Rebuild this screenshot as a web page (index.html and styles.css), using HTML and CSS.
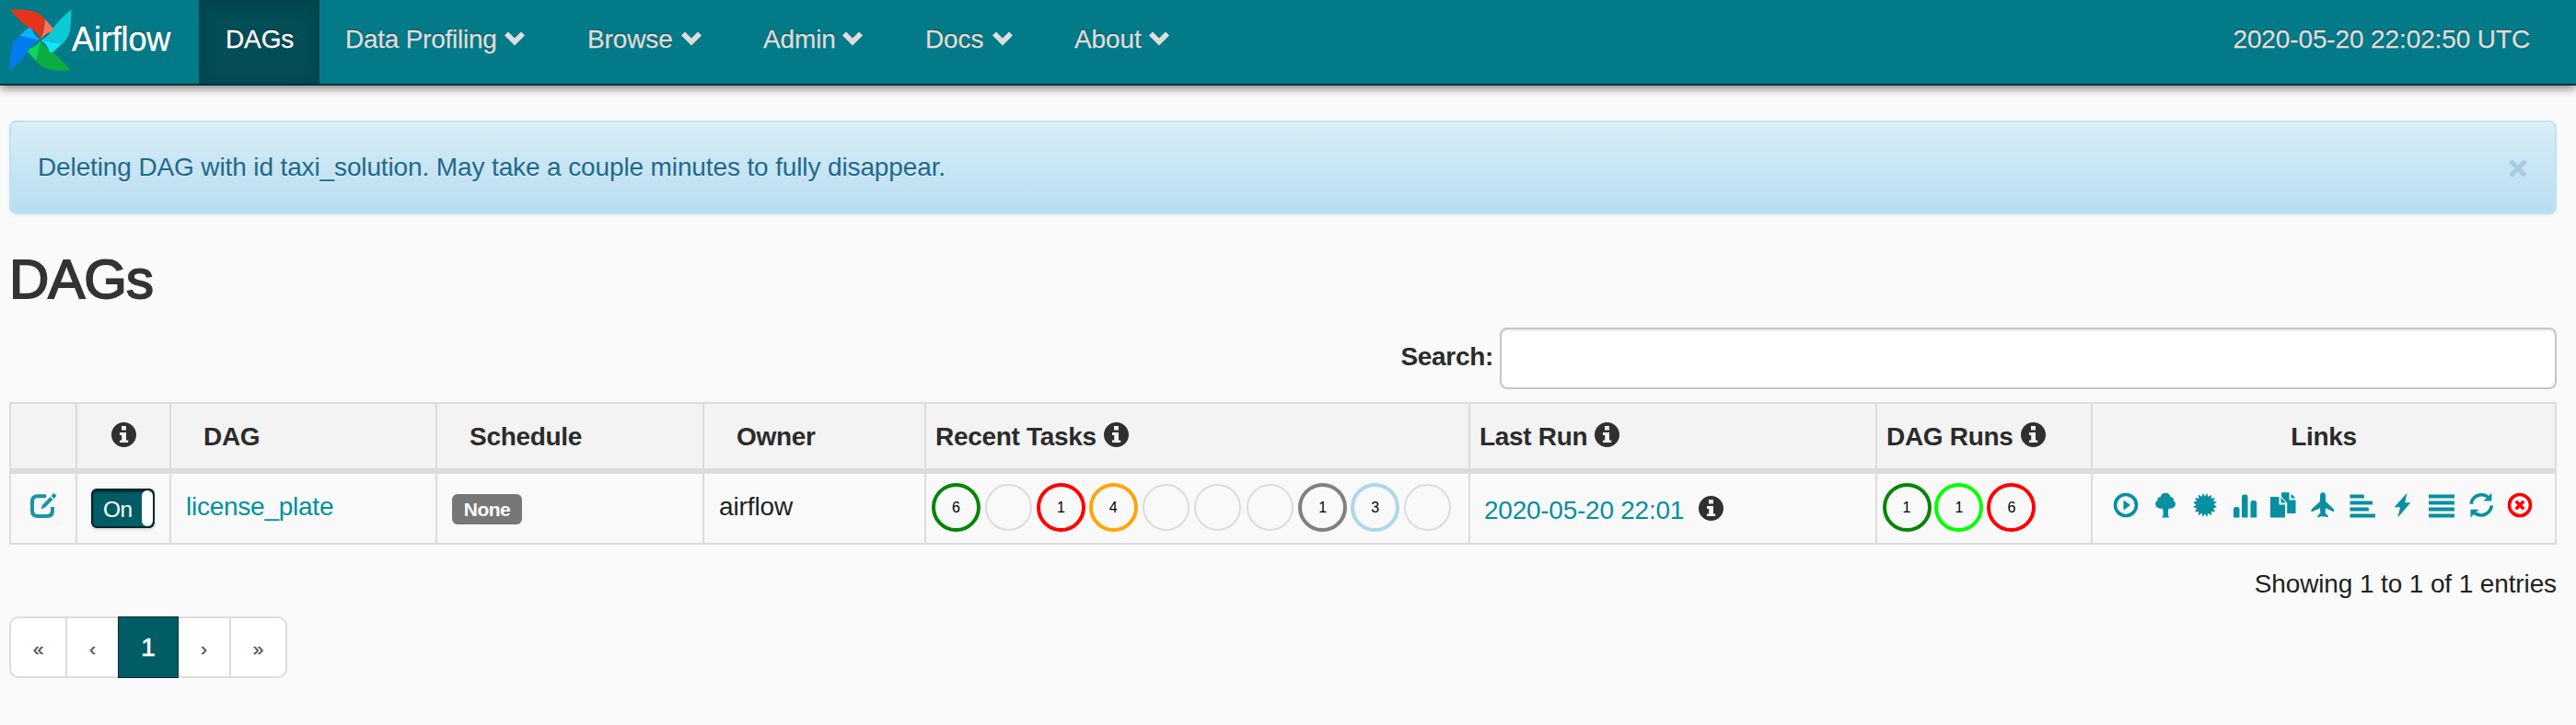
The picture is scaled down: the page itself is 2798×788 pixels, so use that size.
FILE: index.html
```html
<!DOCTYPE html>
<html lang="en">
<head>
<meta charset="utf-8">
<title>Airflow - DAGs</title>
<link rel="stylesheet" href="styles.css">
</head>
<body>
<svg class="defs" width="0" height="0" aria-hidden="true">
  <symbol id="info" viewBox="0 0 27 27"><path fill-rule="evenodd" d="M13.5 0a13.5 13.5 0 1 1 0 27a13.5 13.5 0 1 1 0-27zM11 4v4.6h5V4zM9 11v3h2.200v5.500H9V22h9.200v-2.500H16V11z"/></symbol>
  <symbol id="chevron" viewBox="0 0 22 16"><path d="M0 4.500L4 .6L11 7.500L18 .6L22 4.500L11 15.500z"/></symbol>
</svg>
<nav class="navbar">
  <a class="brand" href="#">
    <svg class="logo" viewBox="30 28 204 204">
      <g transform="rotate(270 132 130)"><path fill="#017cee" d="M32 30C90 30 125 32 146 62Q136 95 132 130Q122 105 92 88Q68 72 32 30z"/><path fill="#11b0ff" d="M146 62Q160 76 174 93Q172 102 160 105Q145 110 132 130Q138 90 146 62z"/></g>
      <g transform="rotate(180 132 130)"><path fill="#0bad43" d="M32 30C90 30 125 32 146 62Q136 95 132 130Q122 105 92 88Q68 72 32 30z"/><path fill="#0bd659" d="M146 62Q160 76 174 93Q172 102 160 105Q145 110 132 130Q138 90 146 62z"/></g>
      <g transform="rotate(90 132 130)"><path fill="#0cc9d6" d="M32 30C90 30 125 32 146 62Q136 95 132 130Q122 105 92 88Q68 72 32 30z"/><path fill="#11e5f2" d="M146 62Q160 76 174 93Q172 102 160 105Q145 110 132 130Q138 90 146 62z"/></g>
      <path fill="#e6341a" d="M32 30C90 30 125 32 146 62Q144 95 132 130Q130 105 92 88Q68 72 32 30z"/><path fill="#ff7458" d="M146 62Q160 76 174 93Q172 102 160 105Q145 110 132 130Q148 90 146 62z"/>
      <circle cx="132" cy="130" r="4" fill="#40605c"/>
    </svg><span>Airflow</span>
  </a>
  <a class="item active" href="#">DAGs</a>
  <a class="item profiling" href="#">Data Profiling<svg class="caret"><use href="#chevron"/></svg></a>
  <a class="item browse" href="#">Browse<svg class="caret"><use href="#chevron"/></svg></a>
  <a class="item admin" href="#">Admin<svg class="caret"><use href="#chevron"/></svg></a>
  <a class="item docs" href="#">Docs<svg class="caret"><use href="#chevron"/></svg></a>
  <a class="item about" href="#">About<svg class="caret"><use href="#chevron"/></svg></a>
  <span class="clock">2020-05-20 22:02:50 UTC</span>
</nav>
<main>
  <div class="alert"><span>Deleting DAG with id taxi_solution. May take a couple minutes to fully disappear.</span>
    <svg class="close" viewBox="0 0 20 20"><path d="M2 2L18 18M18 2L2 18"/></svg></div>
  <h1>DAGs</h1>
  <div class="search"><label for="q">Search:</label><input id="q" type="text"></div>
  <div class="table">
    <div class="th"></div>
    <div class="th mid"><svg class="info"><use href="#info"/></svg></div>
    <div class="th wide">DAG</div>
    <div class="th wide">Schedule</div>
    <div class="th wide">Owner</div>
    <div class="th">Recent Tasks<svg class="info"><use href="#info"/></svg></div>
    <div class="th">Last Run<svg class="info"><use href="#info"/></svg></div>
    <div class="th">DAG Runs<svg class="info"><use href="#info"/></svg></div>
    <div class="th mid">Links</div>

    <div class="td"><svg class="edit" viewBox="0 0 29 27"><path class="line" d="M17 3.200H8Q2 3.200 2 9V19Q2 25 8 25H18Q24 25 24 19V15"/><path d="M11.500 17.500L13 13L21.500 4L24.500 7L16 15.500zM22.500 3L25.200 .3Q26 0 28.200 2.500Q28.500 3 25.500 6z"/></svg></div>
    <div class="td"><div class="toggle"><span>On</span><i></i></div></div>
    <div class="td"><a href="#">license_plate</a></div>
    <div class="td"><span class="badge">None</span></div>
    <div class="td">airflow</div>
    <div class="td circles">
      <b class="full success">6</b><b></b><b class="full failed">1</b><b class="full upstream">4</b><b></b><b></b><b></b><b class="full queued">1</b><b class="full none">3</b><b></b>
    </div>
    <div class="td last"><a href="#">2020-05-20 22:01</a><svg class="info"><use href="#info"/></svg></div>
    <div class="td circles runs"><b class="full success">1</b><b class="full running">1</b><b class="full failed">6</b></div>
    <div class="td links">
      <svg viewBox="0 0 28 28"><circle class="line" cx="14" cy="14" r="11.500"/><path d="M11.500 8.500L19 14L11.500 19.500z"/></svg>
      <svg viewBox="0 0 28 28"><path d="M14 .8C17 .8 19 2.500 19.700 5.200C22 5 23.500 7 22.700 9.200C25 10 25.400 12.500 24.600 14.500C23.700 17 20.500 18.200 18 17.500L17 19.500V25.800L18 26.500V27.500H10.500V26.500L11.500 25.800V19.500L10.500 17.500C7.500 18.200 4.500 17 3.500 14.500C2.800 12 3.200 10 5.500 9.200C4.800 7 6.500 5 8.700 5.200C9.300 2.500 11 .8 14 .8z"/></svg>
      <svg viewBox="0 0 28 28"><path d="M14 4.500L16.400 1L17.300 5.100L21.200 2.700L20.700 6.900L25 6.100L22.900 9.800L27 10.600L23.600 13.300L27 16.200L23 17.500L25 21.500L20.800 20.800L21.200 25.200L17.400 22.800L16.300 27L14 23.500L11.600 27L10.600 22.800L6.800 25.200L7.200 21L3 21.500L5.200 17.600L1 16.300L4.400 13.700L1 10.700L5.100 9.800L3 6.100L7.300 6.900L6.800 2.600L10.600 5.100L11.700 1z"/></svg>
      <svg viewBox="0 0 28 28"><path d="M2 27.500V18.500Q2 16 4 16H6.500Q8.500 16 8.500 18.500V27.500zM11 27.500V5Q11 2.500 13 2.500H15.500Q17.500 2.500 17.500 5V27.500zM20.500 27.500V11.500Q20.500 9 22.500 9H25Q27.200 9 27.200 11.500V27.500z"/></svg>
      <svg viewBox="0 0 28 28"><path d="M0 5H9.500V13.500H16V27.500H0zM11.500 5.500L17 11.500H11.500zM12 .3H20.500V8.500H27.500V23H18.200V11.500L12 4.500zM22.500 1.500L27.500 6.500H22.500z"/></svg>
      <svg viewBox="0 0 28 28"><path d="M14 .3Q17 .3 17 4.200V10L25.800 18.200Q26.500 19 26.200 21.500L17 17.200Q17 20.500 16.600 22.500L19.500 25.400V27.500L14.800 26L14 27.200L13.200 26L8.500 27.500V25.400L11.400 22.500Q11 20.500 11 17.200L1.500 21.500Q1.200 19 2 18.200L11 10V4.200Q11 .3 14 .3z"/></svg>
      <svg viewBox="0 0 28 28"><path d="M.5 2.500H15.500L16.200 6.500H.5zM.5 9.500H24.500L25.500 13.500H.5zM.5 16.500H20.500L21.300 20.500H.5zM.5 23.500H28V27.500H.5z"/></svg>
      <svg viewBox="0 0 28 28"><path d="M19.500 .8L17.300 11.300H23.300L9.500 27.600L12 16.300H5.600z"/></svg>
      <svg viewBox="0 0 28 28"><path d="M0 2.500H28V6.500H0zM0 9.500H28V13.500H0zM0 16.500H28V20.500H0zM0 23.500H28V27.500H0z"/></svg>
      <svg viewBox="0 0 28 28"><path class="line" d="M3 12.800Q4 5 12 3Q18.500 2 22.500 6.500M25.500 14.500Q24 22.500 16.500 24.800Q10 26 5.800 21.500"/><path d="M25.400 .8V9.500H16.500zM2.500 18.800H11.500L2.500 27.500z"/></svg>
      <svg class="delete" viewBox="0 0 28 28"><circle class="line" cx="14" cy="14" r="11.500"/><path class="line" d="M9.800 9.800L18.200 18.200M18.200 9.800L9.800 18.200"/></svg>
    </div>
  </div>
  <div class="summary">Showing 1 to 1 of 1 entries</div>
  <div class="pagination"><a class="p1">«</a><a class="p2">‹</a><a class="current">1</a><a class="p4">›</a><a class="p5">»</a></div>
</main>
</body>
</html>
```

FILE: styles.css
```css
* { box-sizing: border-box; }
body { margin: 0; background: #fafafa; color: #1f1f1f; font: 28px/40px "Liberation Sans", Arial, sans-serif; letter-spacing: -.12px; }
a { color: #018fa0; text-decoration: none; }
svg { display: block; flex: none; }
.defs { position: absolute; }
.navbar { display: flex; height: 93px; background: #037a87; border-bottom: 2px solid #052f3b; box-shadow: 0 3px 10px rgba(0,0,0,.5); text-shadow: 0 -1px 1px rgba(0,0,0,.6); }
.brand { display: flex; width: 216px; padding: 9px 0 0 10px; color: #fff; font-size: 36px; }
.brand span { padding-top: 14px; -webkit-text-stroke: .4px; }
.logo { width: 68px; height: 69px; }
.item { display: flex; padding: 23px 37px 0 30px; color: #ddd; white-space: nowrap; -webkit-text-stroke: .3px; }
.active { width: 131px; padding-left: 29px; background: #024d56; color: #fff; box-shadow: inset 0 3px 18px rgba(0,0,0,.2); }
.profiling { width: 260px; padding-left: 28px; letter-spacing: -.25px; }
.browse { width: 192px; padding-left: 31px; }
.admin { width: 175px; }
.docs { width: 163px; padding-left: 31px; }
.about { width: 170px; }
.caret { width: 22px; height: 16px; margin: 11px 0 0 auto; fill: #ddd; }
.clock { margin-left: auto; padding: 23px 50px 0 0; color: #ddd; -webkit-text-stroke: .3px; }
main { padding: 38px 21px 0 10px; }
.alert { display: flex; justify-content: space-between; height: 102px; padding: 29px 30px 0 29px; border: 2px solid #b8e6ef; border-radius: 8px; background: linear-gradient(#d9edf7, #c8e5f3 50%, #b9def0); color: #21698c; box-shadow: inset 0 2px 0 rgba(255,255,255,.25), 0 2px 4px rgba(0,0,0,.05); text-shadow: 0 2px 0 rgba(255,255,255,.2); letter-spacing: -.125px; }
.close { width: 20px; height: 20px; margin-top: 11px; stroke: #a7cbdf; stroke-width: 5; }
h1 { margin: 38px 0 19px; color: #333; font-size: 60px; line-height: 66px; font-weight: 400; letter-spacing: -1px; -webkit-text-stroke: 1.8px #333; }
.search { display: flex; justify-content: flex-end; height: 67px; color: #2b2b2b; font-weight: 700; }
.search label { padding: 12px 7px 0 0; letter-spacing: -.3px; }
.search input { width: 1148px; height: 67px; border: 2px solid #c4c6c6; border-radius: 8px; background: #fff; box-shadow: inset 0 2px 2px rgba(0,0,0,.075); }
.table { display: grid; grid-template-columns: 72px 102px 289px 290px 241px 591px 442px 234px 504px; grid-template-rows: 78px 77px; margin-top: 14px; border-left: 2px solid #dcdcdc; }
.th, .td { display: flex; border-right: 2px solid #dcdcdc; }
.th { padding: 16px 0 0 10px; border-top: 2px solid #dcdcdc; border-bottom: 6px solid #dcdcdc; background: #f3f3f3; color: #2b2b2b; font-weight: 700; letter-spacing: -.3px; white-space: nowrap; }
.wide { padding-left: 35px; }
.mid { padding-left: 0; justify-content: center; }
.td { padding: 16px 0 0 16px; border-bottom: 2px solid #dcdcdc; background: #f9f9f9; }
.info { width: 27px; height: 27px; margin: 4px 0 0 8px; fill: #303030; }
.mid .info { margin-left: 0; }
.edit { width: 29px; height: 27px; margin: 5px 0 0 5px; fill: #1795a7; }
.line { fill: none; stroke: #1795a7; stroke-width: 4; }
.td a { letter-spacing: -.25px; }
.toggle { display: flex; justify-content: space-between; width: 69px; height: 43px; margin-left: -2px; padding-left: 11px; border: 2px solid #02272d; border-radius: 6px; background: #025c65; box-shadow: inset 0 2px 2px #012e35, 0 2px 3px rgba(0,0,0,.12); color: #fff; font-size: 24.5px; line-height: 42px; transform: translateX(1px); }
.toggle span { letter-spacing: -.6px; }
.toggle i { width: 12px; height: 39px; border-radius: 6px; background: #fff; }
.td .badge { width: 76px; height: 33px; margin-top: 6px; border-radius: 6px; background: #777; color: #fff; font-size: 21px; line-height: 33px; font-weight: 700; letter-spacing: -.5px; text-align: center; }
.circles { gap: 3.9px; padding: 10px 0 0 6px; }
.circles.runs { padding-left: 5.5px; }
.circles b { width: 51px; height: 51px; margin: 1px; border: 2px solid #dcdcdc; border-radius: 50%; color: #000; font-size: 16px; font-weight: 400; line-height: 46px; text-align: center; }
.circles .full { width: 53px; height: 53px; margin: 0; border-width: 4px; }
.circles .success { border-color: #078407; }
.circles .failed { border-color: #f00; }
.circles .upstream { border-color: #ffa50a; }
.circles .queued { border-color: #808080; }
.circles .none { border-color: #add8e6; }
.circles .running { border-color: #0f0; }
.td.last { padding: 20px 0 0 15px; }
.last .info { margin-left: 16px; }
.td.links { gap: 14.85px; padding: 19.5px 0 0 22px; }
.links svg { width: 28px; height: 28px; fill: #0690a1; }
.links .line { stroke: #0690a1; stroke-width: 3.6; }
.links .delete .line { stroke: #f00; }
.summary { margin-top: 23px; text-align: right; }
.pagination { display: flex; width: 302px; height: 67px; margin-top: 15px; border: 2px solid #dcdcdc; border-radius: 10px; background: #fff; }
.pagination a { height: 63px; color: #555; font-size: 21px; line-height: 65px; text-align: center; -webkit-text-stroke: .4px; }
.p1 { width: 61px; border-right: 2px solid #dcdcdc; }
.p2 { width: 55px; }
.pagination .current { width: 66px; height: 67px; margin-top: -2px; border: 1px solid #022c3a; background: #025c65; color: #fff; font-size: 28px; line-height: 66px; -webkit-text-stroke: .7px #fff; }
.p4 { width: 57px; border-right: 2px solid #dcdcdc; }
.p5 { width: 59px; }
```
